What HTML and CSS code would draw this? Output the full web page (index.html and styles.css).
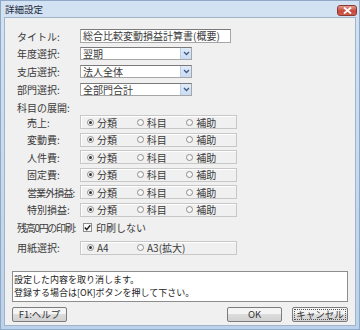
FILE: index.html
```html
<!DOCTYPE html>
<html lang="ja">
<head>
  <meta charset="UTF-8">
  <title>詳細設定</title>
  <link rel="stylesheet" href="styles.css">
</head>
<body>

<div class="window">
  <div class="titlebar">
    <span class="title">詳細設定</span>
    <span class="close-btn">
      <svg width="9" height="7" viewBox="0 0 9 7"><path d="M1 0.5 L8 6.5 M8 0.5 L1 6.5" stroke="#fff" stroke-width="1.8"/></svg>
    </span>
  </div>

  <div class="client">
    <div class="row row-title">
      <span class="lbl">タイトル:</span>
      <div class="textbox">総合比較変動損益計算書(概要)</div>
    </div>
    <div class="row row-sel first-sel">
      <span class="lbl">年度選択:</span>
      <div class="select"><span class="sel-text">翌期</span><span class="drop"><svg width="7" height="5" viewBox="0 0 7 5"><path d="M1 1 L3.5 3.5 L6 1" fill="none" stroke="#3d5a86" stroke-width="1.3"/></svg></span></div>
    </div>
    <div class="row row-sel">
      <span class="lbl">支店選択:</span>
      <div class="select"><span class="sel-text">法人全体</span><span class="drop"><svg width="7" height="5" viewBox="0 0 7 5"><path d="M1 1 L3.5 3.5 L6 1" fill="none" stroke="#3d5a86" stroke-width="1.3"/></svg></span></div>
    </div>
    <div class="row row-sel">
      <span class="lbl">部門選択:</span>
      <div class="select"><span class="sel-text">全部門合計</span><span class="drop"><svg width="7" height="5" viewBox="0 0 7 5"><path d="M1 1 L3.5 3.5 L6 1" fill="none" stroke="#3d5a86" stroke-width="1.3"/></svg></span></div>
    </div>

    <div class="row row-head">
      <span class="lbl">科目の展開:</span>
    </div>

    <!-- 科目ごとの展開方法 -->
    <div class="row row-group first-group">
      <span class="lbl sub">売上:</span>
      <div class="group">
        <span class="opt"><i class="radio on"></i>分類</span>
        <span class="opt"><i class="radio"></i>科目</span>
        <span class="opt"><i class="radio"></i>補助</span>
      </div>
    </div>
    <div class="row row-group">
      <span class="lbl sub">変動費:</span>
      <div class="group">
        <span class="opt"><i class="radio on"></i>分類</span>
        <span class="opt"><i class="radio"></i>科目</span>
        <span class="opt"><i class="radio"></i>補助</span>
      </div>
    </div>
    <div class="row row-group">
      <span class="lbl sub">人件費:</span>
      <div class="group">
        <span class="opt"><i class="radio on"></i>分類</span>
        <span class="opt"><i class="radio"></i>科目</span>
        <span class="opt"><i class="radio"></i>補助</span>
      </div>
    </div>
    <div class="row row-group">
      <span class="lbl sub">固定費:</span>
      <div class="group">
        <span class="opt"><i class="radio on"></i>分類</span>
        <span class="opt"><i class="radio"></i>科目</span>
        <span class="opt"><i class="radio"></i>補助</span>
      </div>
    </div>
    <div class="row row-group">
      <span class="lbl sub tight">営業外損益:</span>
      <div class="group">
        <span class="opt"><i class="radio on"></i>分類</span>
        <span class="opt"><i class="radio"></i>科目</span>
        <span class="opt"><i class="radio"></i>補助</span>
      </div>
    </div>
    <div class="row row-group">
      <span class="lbl sub">特別損益:</span>
      <div class="group">
        <span class="opt"><i class="radio on"></i>分類</span>
        <span class="opt"><i class="radio"></i>科目</span>
        <span class="opt"><i class="radio"></i>補助</span>
      </div>
    </div>

    <div class="row row-check">
      <span class="lbl tighter">残高0円の印刷:</span>
      <span class="check-opt">
        <i class="checkbox"><svg width="7" height="7" viewBox="0 0 7 7"><path d="M0.8 3.6 L2.7 5.6 L6.3 1.2" fill="none" stroke="#222" stroke-width="1.4"/></svg></i>印刷しない
      </span>
    </div>

    <div class="row row-paper">
      <span class="lbl">用紙選択:</span>
      <div class="group">
        <span class="opt"><i class="radio on"></i>A4</span>
        <span class="opt"><i class="radio"></i>A3(拡大)</span>
      </div>
    </div>

    <div class="message">設定した内容を取り消します。<br>登録する場合は[OK]ボタンを押して下さい。</div>

    <div class="buttons">
      <button class="btn">F1:ヘルプ</button>
      <div class="btn-right">
        <button class="btn">OK</button>
        <button class="btn focused">キャンセル</button>
      </div>
    </div>
  </div>
</div>

</body>
</html>
```

FILE: styles.css
```css
body {
  margin: 0;
  background: #ffffff;
  font-family: "Noto Sans CJK JP", "Liberation Sans", sans-serif;
  font-size: 10px;
  color: #3a3a3a;
}
.window {
  width: 360px;
  height: 330px;
  box-sizing: border-box;
  background: linear-gradient(#d3e2f3, #bcd2ea);
  border: 1px solid #8ea8c6;
  display: flex;
  flex-direction: column;
}
.titlebar {
  height: 16px;
  display: flex;
  align-items: center;
  justify-content: space-between;
  padding: 0 2px 0 4px;
}
.title {
  font-size: 9.5px;
  color: #1e2a3a;
}
.close-btn {
  width: 20px;
  height: 11px;
  margin-top: 3px;
  display: flex;
  align-items: center;
  justify-content: center;
  background: linear-gradient(#e59c8f, #c8473a 55%, #d0614f);
  border: 1px solid #8b3a33;
  border-radius: 3px;
  box-sizing: border-box;
}
.client {
  margin: 0 3px 3px 3px;
  flex: 1;
  background: #f0f0f0;
  border: 1px solid #9fb3c9;
  padding: 0 7px;
  display: flex;
  flex-direction: column;
}
.row {
  display: flex;
  align-items: center;
  padding-left: 5px;
}
.lbl {
  width: 63px;
  flex: none;
  white-space: nowrap;
  overflow: visible;
}
.lbl.sub {
  padding-left: 10px;
  box-sizing: border-box;
}
.lbl.tight {
  letter-spacing: -0.9px;
}
.lbl.tighter {
  letter-spacing: -1.3px;
}
.row-title {
  margin-top: 11px;
  height: 14px;
}
.row-sel {
  margin-top: 5px;
  height: 13px;
}
.row-sel.first-sel {
  margin-top: 4px;
}
.row-head {
  margin-top: 5px;
  height: 12px;
}
.row-group {
  margin-top: 3.6px;
  height: 14px;
}
.row-group.first-group {
  margin-top: 2px;
}
.row-check {
  margin-top: 5px;
  height: 12px;
}
.row-paper {
  margin-top: 7px;
  height: 14px;
}
.textbox {
  width: 151px;
  height: 14px;
  box-sizing: border-box;
  background: #fff;
  border: 1px solid #a6a6a6;
  border-top-color: #7a7a7a;
  padding-left: 2px;
  line-height: 12px;
  white-space: nowrap;
  overflow: hidden;
}
.select {
  width: 112px;
  height: 13px;
  box-sizing: border-box;
  background: #fff;
  border: 1px solid #a6a6a6;
  border-top-color: #7a7a7a;
  display: flex;
  align-items: stretch;
}
.sel-text {
  flex: 1;
  padding-left: 2px;
  line-height: 11px;
  white-space: nowrap;
}
.drop {
  width: 10px;
  background: linear-gradient(#e0ebf8, #c9dcf3);
  border-left: 1px solid #b9cde6;
  display: flex;
  align-items: center;
  justify-content: center;
}
.group {
  width: 157px;
  height: 14px;
  box-sizing: border-box;
  border: 1px solid #c7c7c7;
  box-shadow: inset 1px 1px 0 #fff;
  display: flex;
  align-items: center;
  padding-left: 6px;
}
.opt {
  width: 50px;
  display: flex;
  align-items: center;
  white-space: nowrap;
}
.radio {
  width: 7px;
  height: 7px;
  box-sizing: border-box;
  border: 1px solid #8d8d8d;
  border-radius: 50%;
  background: #f8f8f8;
  margin-right: 3px;
  display: inline-flex;
  align-items: center;
  justify-content: center;
}
.radio.on::after {
  content: "";
  width: 3px;
  height: 3px;
  border-radius: 50%;
  background: #333;
}
.check-opt {
  display: flex;
  align-items: center;
  margin-left: 3px;
}
.checkbox {
  width: 9px;
  height: 9px;
  box-sizing: border-box;
  border: 1px solid #8d8d8d;
  background: #fafafa;
  margin-right: 4px;
  display: inline-flex;
  align-items: center;
  justify-content: center;
}
.message {
  margin-top: 16px;
  height: 31px;
  box-sizing: border-box;
  background: #fff;
  border: 1px solid #8e8e8e;
  padding: 1px 1px 0;
  font-size: 9px;
  line-height: 13px;
  color: #222;
}
.buttons {
  margin-top: 5px;
  display: flex;
  justify-content: space-between;
}
.btn-right {
  display: flex;
  gap: 10px;
}
.btn {
  width: 55px;
  height: 15px;
  padding: 0;
  font-family: inherit;
  font-size: 9.5px;
  color: #333;
  background: linear-gradient(#f4f4f4 45%, #dcdcdc 50%, #d2d2d2);
  border: 1px solid #7c7c7c;
  border-radius: 2px;
  line-height: 13px;
}
.btn.focused {
  width: 56px;
  outline: 1px dotted #555;
  outline-offset: -3px;
}
```
